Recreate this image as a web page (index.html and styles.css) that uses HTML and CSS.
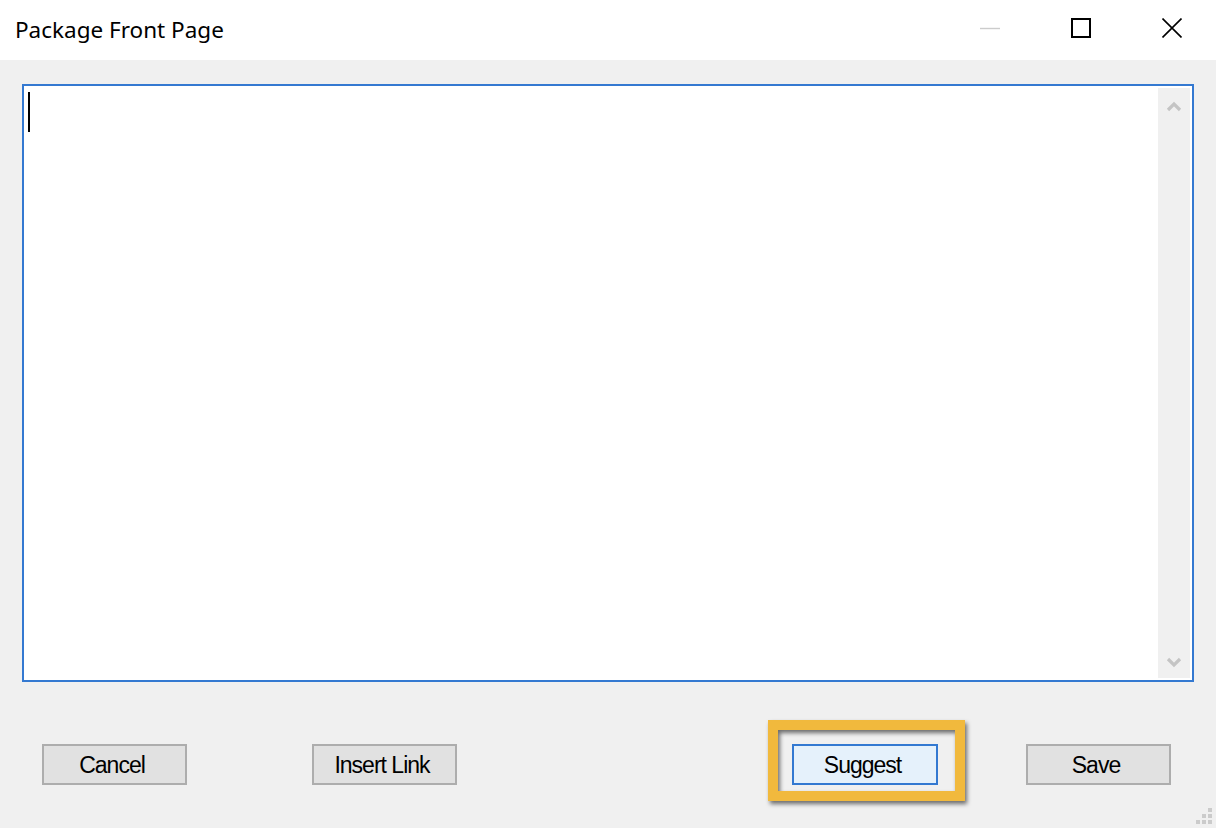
FILE: index.html
```html
<!DOCTYPE html>
<html>
<head>
<meta charset="utf-8">
<link rel="stylesheet" href="styles.css">
</head>
<body>
<div class="window">
  <header class="titlebar">
    <span class="title">Package Front Page</span>
    <div class="controls">
      <svg class="ctl" width="20" height="20" viewBox="0 0 20 20"><line x1="0" y1="10.5" x2="20" y2="10.5" stroke="#cccccc" stroke-width="1.4"/></svg>
      <svg class="ctl" width="20" height="20" viewBox="0 0 20 20"><rect x="1" y="1" width="18" height="18" fill="none" stroke="#000" stroke-width="2"/></svg>
      <svg class="ctl" width="20" height="20" viewBox="0 0 20 20"><path d="M0.5 0.5 L19.5 19.5 M19.5 0.5 L0.5 19.5" stroke="#000" stroke-width="1.6"/></svg>
    </div>
  </header>
  <main class="content">
    <div class="editor">
      <div class="textarea"><span class="caret"></span></div>
      <div class="scrollbar">
        <svg width="16" height="12" viewBox="0 0 16 12"><path d="M2 10 L8 4 L14 10" fill="none" stroke="#c4c4c4" stroke-width="3.2"/></svg>
        <svg width="16" height="12" viewBox="0 0 16 12"><path d="M2 2 L8 8 L14 2" fill="none" stroke="#c4c4c4" stroke-width="3.2"/></svg>
      </div>
    </div>
    <div class="buttons">
      <button class="btn btn-cancel">Cancel</button>
      <button class="btn btn-link">Insert Link</button>
      <span class="suggest-wrap">
        <button class="btn btn-suggest">Suggest</button>
        <span class="highlight"></span>
      </span>
      <button class="btn btn-save">Save</button>
    </div>
    <svg class="grip" width="16" height="16" viewBox="0 0 16 16">
      <rect x="12" y="0" width="4" height="4" fill="#cbcbcb"/>
      <rect x="6" y="6" width="4" height="4" fill="#cbcbcb"/>
      <rect x="12" y="6" width="4" height="4" fill="#cbcbcb"/>
      <rect x="0" y="12" width="4" height="4" fill="#cbcbcb"/>
      <rect x="6" y="12" width="4" height="4" fill="#cbcbcb"/>
      <rect x="12" y="12" width="4" height="4" fill="#cbcbcb"/>
    </svg>
  </main>
</div>
</body>
</html>
```
FILE: styles.css
```css
* { box-sizing: border-box; }
html, body { margin: 0; padding: 0; }
body {
  width: 1216px;
  height: 828px;
  overflow: hidden;
  background: #f0f0f0;
  font-family: "Liberation Sans", Arial, sans-serif;
}
.window {
  width: 1216px;
  height: 828px;
  display: flex;
  flex-direction: column;
}
.titlebar {
  height: 60px;
  background: #ffffff;
  display: flex;
  align-items: center;
  justify-content: space-between;
  padding-left: 15px;
}
.title {
  font-family: "Noto Sans", "Open Sans", sans-serif;
  font-size: 22.5px;
  color: #000;
  margin-top: -1px;
}
.controls {
  display: flex;
  align-self: flex-start;
  padding-top: 18px;
  padding-right: 34px;
  gap: 70px;
}
.controls .ctl + .ctl { margin-left: 1px; }
.ctl { display: block; }
.content {
  position: relative;
  flex: 1;
  padding: 24px 22px 0 22px;
}
.editor {
  height: 598px;
  border: 2px solid #3479d1;
  background: #ffffff;
  padding: 2px;
  display: flex;
}
.textarea {
  flex: 1;
  padding: 4px 0 0 2px;
}
.caret {
  display: block;
  width: 2px;
  height: 40px;
  background: #000;
}
.scrollbar {
  width: 32px;
  background: #f0f0f0;
  display: flex;
  flex-direction: column;
  justify-content: space-between;
  align-items: center;
  padding: 12px 0 9px 0;
}
.scrollbar svg { display: block; }
.buttons {
  display: flex;
  align-items: flex-start;
  margin-top: 62px;
  padding-left: 20px;
}
.btn {
  height: 41px;
  width: 145px;
  border: 2px solid #adadad;
  background: #e1e1e1;
  font-family: "Liberation Sans", Arial, sans-serif;
  font-size: 23px;
  letter-spacing: -1px;
  color: #000;
  padding: 2px 5px 0 0;
  margin: 0;
}
.btn-link { margin-left: 125px; }
.suggest-wrap {
  position: relative;
  margin-left: 335px;
  display: block;
}
.btn-suggest {
  width: 146px;
  display: block;
  border-color: #3379d1;
  background: #e5f1fb;
}
.highlight {
  position: absolute;
  left: -24px;
  top: -24px;
  width: 197px;
  height: 81px;
  border: 10px solid #f1b93d;
  filter: drop-shadow(2px 3px 2px rgba(0,0,0,0.55));
  pointer-events: none;
}
.btn-save { margin-left: 88px; }
.grip {
  position: absolute;
  right: 4px;
  bottom: 4px;
}
```
